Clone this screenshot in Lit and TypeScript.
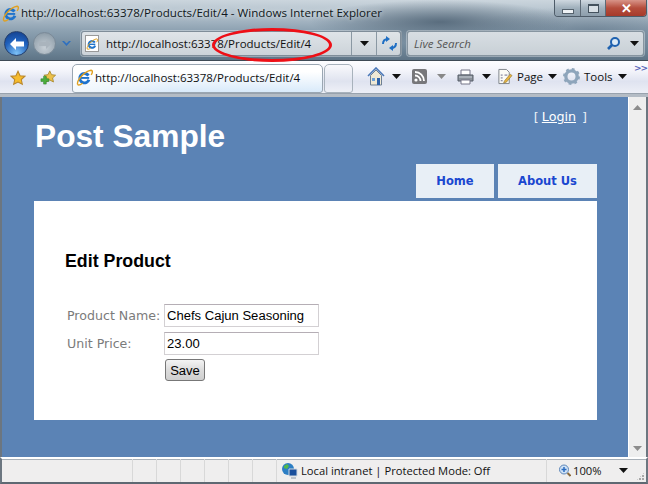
import { LitElement, html, css } from "lit";
import { customElement } from "lit/decorators.js";

const ie = (s: number) => html`<svg class="ie" width=${s} height=${s} viewBox="0 0 16 16">
  <circle cx="8" cy="8.600" r="4.400" fill="none" stroke="#1f73cc" stroke-width="2.800" stroke-dasharray="23 5" transform="rotate(20 8 8.600)"/>
  <path d="M3.600 8.400h8.800" stroke="#1f73cc" stroke-width="1.800"/>
  <path d="M1.600 14.700C.2 11 8 2 14.200 1.200c1.800.2 1.400 2.600 0 4.400M1.600 14.700c1 1 3-.1 4.600-1.300" fill="none" stroke="#e0a020" stroke-width="1.300"/>
</svg>`;
const arrow = (c = "#111", cls = "") => html`<svg class="arrow ${cls}" width="9" height="5" viewBox="0 0 9 5"><path d="M0 0h9L4.500 5z" fill=${c}/></svg>`;
const star = html`<svg width="16" height="16" viewBox="0 0 20 20"><path d="M10 1.500l2.600 5.600 6 .7-4.500 4.100 1.300 6L10 15l-5.400 2.900 1.300-6L1.400 7.800l6-.7z" fill="#f6bb2c" stroke="#b9862a" stroke-width="1.300"/></svg>`;
const addStar = html`<svg width="16" height="15" viewBox="0 0 18 17"><path d="M11 1l2 4.300 4.600.6-3.400 3.100 1 4.600L11 11.300l-4.200 2.300 1-4.600L4.400 5.900 9 5.300z" fill="#ecc04a" stroke="#aa8a30"/><path d="M1 10h3V7h3v3h3v3H7v3H4v-3H1z" fill="#4aae3c" stroke="#2f7d2a" stroke-width=".6"/></svg>`;

@customElement("app-root")
export class AppRoot extends LitElement {
  static styles = css`
    :host { display: block; width: 648px; height: 484px; overflow: hidden; position: relative; font-family: "Open Sans", "Noto Sans", sans-serif; color: #111; }
    .win { width: 648px; height: 484px; display: flex; flex-direction: column; background: #e9e9e9; }
    .chrome { height: 60px; display: flex; flex-direction: column; flex: none;
      background:
        radial-gradient(ellipse 130px 22px at 440px 22px, rgba(72,92,110,.8), rgba(72,92,110,0)),
        radial-gradient(ellipse 120px 24px at 590px 30px, rgba(78,100,120,.45), rgba(78,100,120,0)),
        linear-gradient(180deg, #cbd5dd 0, #aebdc9 16px, #8ea2b2 30px, #71889a 48px, #5e7486 60px); }
    .title { height: 28px; display: flex; align-items: flex-start; padding-left: 2px; flex: none; }
    .title .ie { margin-top: 5px; flex: none; }
    .title span { font-size: 11.600px; line-height: 16px; margin: 5px 0 0 2px; color: #101820; text-shadow: 0 0 5px rgba(255,255,255,.8); flex: 1; white-space: nowrap; }
    .wbtns { display: flex; height: 16px; margin-right: 1px; border: 1px solid #4d5b68; border-top: 0; border-radius: 0 0 4px 4px; overflow: hidden; flex: none; }
    .wb { height: 16px; display: flex; align-items: center; justify-content: center; background: linear-gradient(180deg, #cfd8e0, #a0b0bc 50%, #8d9eac); border-right: 1px solid #5d6a76; width: 25px; }
    .wb.max { width: 24px; }
    .wb.close { width: 40px; border-right: 0; background: linear-gradient(180deg, #d89488, #b54d3c 50%, #a63a2a); color: #fff; font: bold 13px "Liberation Sans", sans-serif; }
    .minb { width: 10px; height: 3px; background: #eef2f5; border: 1px solid #56636e; margin-top: 6px; }
    .maxb { width: 9px; height: 6px; border: 1px solid #44525e; border-top-width: 2px; background: #d8e0e6; }
    .nav { display: flex; height: 32px; align-items: center; padding: 0 0 1px 4px; box-sizing: border-box; }
    .back { width: 25px; height: 25px; border-radius: 50%; flex: none; display: flex; align-items: center; justify-content: center; border: 1px solid #26406c;
      background: radial-gradient(circle at 50% 92%, #7cc0f6, #1f60bb 55%, #123a84); box-sizing: border-box; }
    .fwd { width: 23px; height: 23px; border-radius: 50%; flex: none; margin-left: 4px; border: 1px solid #7a8a98; box-sizing: border-box; display: flex; align-items: center; justify-content: center;
      background: radial-gradient(circle at 50% 70%, #c6ced5, #97a5b0 70%, #7f8e9b); }
    .navdrop { width: 9px; margin: 0 10px 0 6px; flex: none; display: flex; }
    .addr { width: 320px; height: 25px; box-sizing: border-box; border: 1px solid #7f8d99; border-radius: 3px; display: flex; align-items: center; flex: none;
      background: linear-gradient(180deg, #dfe4e8, #ccd3d9); box-shadow: 0 0 0 1px rgba(255,255,255,.35); }
    .page { width: 14px; height: 17px; margin-left: 3px; background: #fff; border: 1px solid #999; box-sizing: border-box; display: flex; align-items: center; justify-content: center; flex: none; }
    .url { font-size: 11.500px; margin-left: 7px; width: 245px; white-space: nowrap; flex: none; color: #111; }
    .ab { width: 25px; align-self: stretch; display: flex; align-items: center; justify-content: center; border-left: 1px solid #8a98a3; box-sizing: border-box; flex: none; }
    .search { width: 237px; height: 25px; margin-left: 6px; box-sizing: border-box; border: 1px solid #8795a0; border-radius: 3px; display: flex; align-items: center; background: linear-gradient(180deg, #d8dee3, #c8d0d6); flex: none; padding: 0 4px 0 6px; box-shadow: 0 0 0 1px rgba(255,255,255,.35); }
    .search i { font-size: 11.500px; color: #555; flex: 1; }
    .search svg.arrow { margin-left: 9px; }
    .tools { height: 37px; flex: none; box-sizing: border-box; background: linear-gradient(180deg, #fdfdff 0, #f3f4fa 30%, #dfe3f0 62%, #eef0f7 100%); border-top: 1px solid #3e4a55; border-bottom: 3px solid #b4bcc5; display: flex; align-items: flex-start; padding: 3px 0 0 10px; position: relative; box-shadow: inset 0 -1px 0 #98a2ad; }
    .favs { display: flex; align-items: center; gap: 14px; width: 62px; height: 21px; padding-top: 3px; flex: none; box-sizing: content-box; }
    .tab { width: 251px; height: 29px; box-sizing: border-box; border: 1px solid #9aa6b2; border-radius: 5px 5px 3px 3px; display: flex; align-items: center; padding: 0 0 2px 3px; background: linear-gradient(90deg, rgba(255,255,255,.7), rgba(255,255,255,0) 40%), linear-gradient(180deg, #fff 25%, #d9eafa); flex: none; }
    .tab span { font-size: 11.500px; margin-left: 2px; white-space: nowrap; }
    .newtab { width: 29px; height: 29px; box-sizing: border-box; border: 1px solid #a8b2bc; border-radius: 5px 5px 3px 3px; background: linear-gradient(180deg, #f9f9fc, #dfe3ef 60%, #eef0f7); margin-left: 1px; flex: none; }
    .cmds { display: flex; align-items: center; height: 25px; margin-top: 0; flex: 1; padding-left: 14px; font-size: 11.500px; }
    .cmds .g { display: flex; align-items: center; flex: none; }
    .cmds svg { flex: none; }
    .more { position: absolute; right: 1px; top: 2px; font: bold 9px "DejaVu Sans", sans-serif; color: #5a66b8; letter-spacing: -1px; }
    .a7 { margin-left: 7px; } .a10 { margin-left: 10px; } .a8 { margin-left: 8px; } .a5 { margin-left: 5px; }
    .g11 { margin-left: 11px; } .g6 { margin-left: 6px; } .t4 { margin-right: 4px; }
    .body { height: 360px; display: flex; border-left: 2px solid #6c7680; background: #5c84b5; flex: none; }
    .site { width: 626px; flex: none; background: #5b83b5; box-sizing: border-box; padding: 0 31px 0 32px; display: flex; flex-direction: column; }
    .head { display: flex; justify-content: space-between; height: 67px; flex: none; }
    h1 { margin: 20px 0 0 1px; font: bold 31.700px/38px "Liberation Sans", sans-serif; color: #fff; }
    .login { margin: 11px 10px 0 0; color: #eaf0f6; font: 12.700px/18px "DejaVu Sans", sans-serif; display: flex; gap: 6px; height: 18px; }
    .login span:first-child { margin-right: -3px; }
    .login a { color: #fff; text-decoration: underline; }
    .menu { display: flex; justify-content: flex-end; gap: 4px; height: 34px; flex: none; }
    .menu a { height: 34px; display: flex; align-items: center; justify-content: center; background: #e8eff6; color: #1a47d0; font: bold 11.500px "DejaVu Sans", sans-serif; }
    .menu a.h { width: 78px; }
    .menu a.a { width: 99px; }
    .card { margin-top: 3px; height: 219px; flex: none; background: #fff; box-sizing: border-box; padding: 50px 0 0 31px; }
    h2 { margin: 0; font: bold 17.800px/20px "Liberation Sans", sans-serif; color: #000; }
    .form { margin: 33px 0 0 2px; display: grid; grid-template-columns: 97px 155px; row-gap: 5px; align-items: center; }
    label { font: 12.600px/22px "DejaVu Sans", sans-serif; color: #7b7b7b; white-space: nowrap; }
    input { width: 155px; height: 23px; box-sizing: border-box; border: 1px solid #d3d0d3; border-top-color: #b5aeb5; padding: 0 2px; font: 13.050px "Liberation Sans", sans-serif; color: #000; margin: 0; outline: 0; }
    button { grid-column: 2; justify-self: start; width: 40px; height: 22px; margin: -1px 0 0 1px; box-sizing: border-box; border: 1px solid #777; border-radius: 3px; background: linear-gradient(180deg, #f4f4f4, #dcdcdc 50%, #cfcfcf); font: 13.050px "Liberation Sans", sans-serif; color: #000; padding: 0; }
    .sb { width: 18px; flex: none; background: #eeeeee; border-left: 1px solid #fff; box-sizing: border-box; display: flex; flex-direction: column; justify-content: space-between; align-items: center; padding: 8px 0 6px; }
    .rest { width: 2px; background: #6c7680; flex: none; }
    .status { height: 27px; flex: none; box-sizing: border-box; border-top: 2px solid #fff; border-bottom: 2px solid #5e6872; border-left: 2px solid #6c7680; border-right: 2px solid #6c7680; background: #efeeee; display: flex; align-items: center; font-size: 11.200px; color: #111; box-shadow: inset 0 1px 0 #a8b0b8; position: relative; }
    .cell { width: 24px; height: 100%; border-left: 1px solid #d8d8d8; box-sizing: border-box; flex: none; }
    .first { width: 130px; flex: none; }
    .cells { display: flex; height: 100%; flex: none; }
    .zone { display: flex; align-items: center; width: 270px; padding-left: 4px; box-sizing: border-box; border-left: 1px solid #d8d8d8; height: 100%; flex: none; gap: 3px; white-space: nowrap; }
    .zoom { display: flex; align-items: center; border-left: 1px solid #d8d8d8; height: 100%; padding-left: 11px; flex: 1; gap: 2px; }
    .zoom .arrow { margin-left: 16px; }
    .grip { position: absolute; right: 1px; bottom: 1px; width: 9px; height: 9px; background: radial-gradient(circle at 1px 1px, #a8a8a8 1px, transparent 1px) 0 0 / 3px 3px; clip-path: polygon(100% 0, 100% 100%, 0 100%); }
    .oval { position: absolute; left: 212px; top: 28px; width: 120px; height: 34px; box-sizing: border-box; border: 3px solid #ee0f16; border-radius: 50%; }
  `;

  render() {
    return html`<div class="win">
      <div class="chrome">
        <div class="title">${ie(17)}<span>http://localhost:63378/Products/Edit/4 - Windows Internet Explorer</span>
          <div class="wbtns"><div class="wb"><div class="minb"></div></div><div class="wb max"><div class="maxb"></div></div><div class="wb close">✕</div></div>
        </div>
        <div class="nav">
          <div class="back"><svg width="16" height="14" viewBox="0 0 16 14"><path d="M1 7l6-6v3.500h8v5H7V13z" fill="#fff"/></svg></div>
          <div class="fwd"><svg width="14" height="12" viewBox="0 0 14 12"><path d="M13 6L8 1v3H1v4h7v3z" fill="#aab4bd"/></svg></div>
          <div class="navdrop"><svg width="9" height="5" viewBox="0 0 9 5"><path d="M0 0l4.500 5L9 0H7L4.500 2.500 2 0z" fill="#2d6fc0"/></svg></div>
          <div class="addr">
            <div class="page">${ie(12)}</div>
            <div class="url">http://localhost:63378/Products/Edit/4</div>
            <div class="ab">${arrow()}</div>
            <div class="ab"><svg width="17" height="15" viewBox="0 0 17 15"><path d="M2 8c0-3 2-5 5-5" fill="none" stroke="#1f6fc4" stroke-width="2"/><path d="M5 0l4 3-4 3z" fill="#1f6fc4"/><path d="M15 7c0 3-2 5-5 5" fill="none" stroke="#1f6fc4" stroke-width="2"/><path d="M12 9l-4 3 4 3z" fill="#1f6fc4"/></svg></div>
            <div class="ab"><svg width="12" height="12" viewBox="0 0 12 12"><path d="M1.500 1.500l9 9M10.500 1.500l-9 9" stroke="#c9483c" stroke-width="2.600"/></svg></div>
          </div>
          <div class="search"><i>Live Search</i>
            <svg width="15" height="15" viewBox="0 0 15 15"><circle cx="9" cy="6" r="4" fill="#dcebf7" stroke="#1f62b0" stroke-width="2"/><path d="M6 9l-4 4" stroke="#1f62b0" stroke-width="2.600"/></svg>
            ${arrow()}</div>
        </div>
      </div>
      <div class="tools">
        <div class="favs">${star}${addStar}</div>
        <div class="tab">${ie(17)}<span>http://localhost:63378/Products/Edit/4</span></div>
        <div class="newtab"></div>
        <div class="cmds">
          <div class="g"><svg width="18" height="19" viewBox="0 0 18 19"><path d="M1 9l8-8 8 8" fill="none" stroke="#4a78b8" stroke-width="1.600"/><path d="M3.500 8.500V18h11V8.500L9 3z" fill="#efe9d6" stroke="#6d7f93"/><path d="M10 11h3v7h-3z" fill="#2f62a8"/><path d="M5 11h3v3H5z" fill="#6da0d6"/></svg>${arrow("#111", "a7")}</div>
          <div class="g g11"><svg width="15" height="15" viewBox="0 0 15 15"><rect width="15" height="15" rx="2" fill="#77777a"/><circle cx="4" cy="11" r="1.600" fill="#fff"/><path d="M3 6.500c3 0 5.500 2.500 5.500 5.500M3 3c5 0 9 4 9 9" fill="none" stroke="#fff" stroke-width="1.800"/></svg>${arrow("#888", "a10")}</div>
          <div class="g g11"><svg width="17" height="16" viewBox="0 0 17 16"><path d="M4 1h9v5H4z" fill="#fff" stroke="#778"/><path d="M1 6h15v6H1z" fill="#8b929b" stroke="#555c66"/><path d="M4 11h9v4H4z" fill="#fff" stroke="#778"/><path d="M2 8h13" stroke="#c8ced6"/></svg>${arrow("#111", "a8")}</div>
          <div class="g g6"><svg class="t4" width="16" height="17" viewBox="0 0 17 17"><path d="M2 1h8l3 3v12H2z" fill="#fbfbf6" stroke="#7c8188"/><path d="M4 7h2M4 10h2M4 13h2M8 7h3" stroke="#668"/><path d="M8 13l6-7 2 1.500-6 7-3 1z" fill="#e5b23f" stroke="#8a7130" stroke-width=".6"/></svg>Page${arrow("#111", "a5")}</div>
          <div class="g g6"><svg class="t4" width="17" height="17" viewBox="0 0 18 18"><circle cx="9" cy="9" r="6" fill="none" stroke="#8ea5bb" stroke-width="3.500"/><circle cx="9" cy="9" r="8" fill="none" stroke="#8ea5bb" stroke-width="2" stroke-dasharray="3 3.300"/></svg>Tools${arrow("#111", "a5")}</div>
        </div>
        <div class="more">&gt;&gt;</div>
      </div>
      <div class="body">
        <div class="site">
          <div class="head"><h1>Post Sample</h1><div class="login"><span>[</span><a>Login</a><span>]</span></div></div>
          <div class="menu"><a class="h">Home</a><a class="a">About Us</a></div>
          <div class="card">
            <h2>Edit Product</h2>
            <div class="form">
              <label>Product Name:</label><input value="Chefs Cajun Seasoning" />
              <label>Unit Price:</label><input value="23.00" />
              <button>Save</button>
            </div>
          </div>
        </div>
        <div class="sb"><svg width="9" height="5" viewBox="0 0 9 5"><path d="M4.500 0L9 5H0z" fill="#8c8c8c"/></svg><svg width="9" height="5" viewBox="0 0 9 5"><path d="M0 0h9L4.500 5z" fill="#8c8c8c"/></svg></div>
        <div class="rest"></div>
      </div>
      <div class="status">
        <div class="first"></div>
        <div class="cells"><div class="cell"></div><div class="cell"></div><div class="cell"></div><div class="cell"></div><div class="cell"></div><div class="cell"></div></div>
        <div class="zone"><svg width="17" height="17" viewBox="0 0 17 17"><circle cx="7" cy="7" r="6" fill="#2c7ec4"/><path d="M3 4l3-2 2 2-2 3-3-1zM8 8l3 1-1 3-2-1z" fill="#54b84a"/><path d="M8 7h8v7H8z" fill="#1a4f9c" stroke="#cfd8e0"/><path d="M10 16h5" stroke="#8a98a8"/></svg><span>Local intranet | Protected Mode: Off</span></div>
        <div class="zoom"><svg width="13" height="13" viewBox="0 0 13 13"><circle cx="6" cy="5.500" r="4.500" fill="#cfe2f6" stroke="#5e86b8"/><path d="M3.500 5.500h5M6 3v5" stroke="#2c6cc0" stroke-width="1.500"/><path d="M9.500 9l3 3" stroke="#8a6a3c" stroke-width="2"/></svg>100%${arrow()}</div>
        <div class="grip"></div>
      </div>
      <div class="oval"></div>
    </div>`;
  }
}
